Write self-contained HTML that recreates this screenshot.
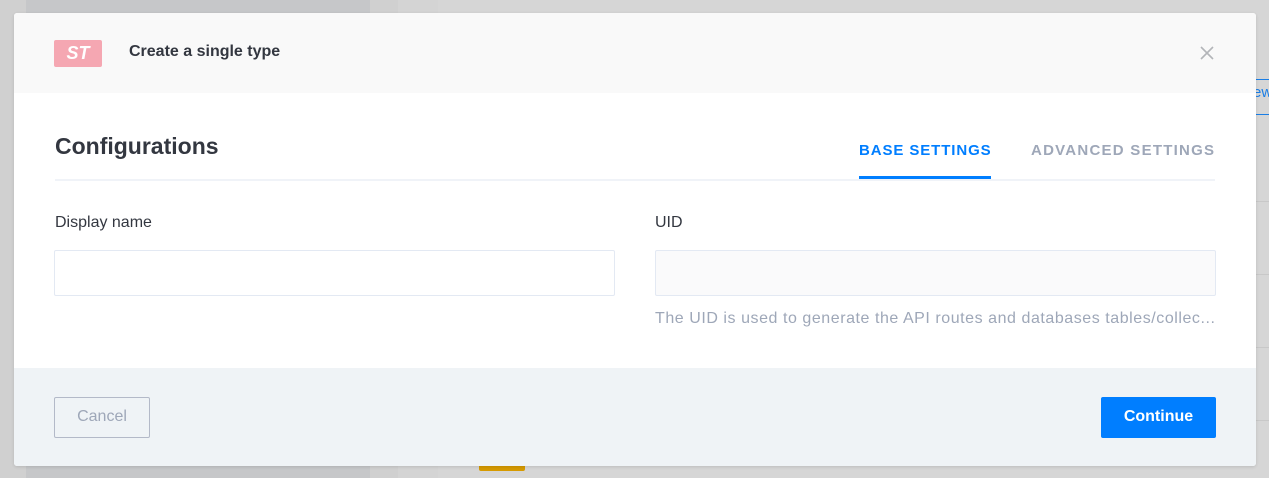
<!DOCTYPE html>
<html><head><style>
*{margin:0;padding:0;box-sizing:border-box}
body{width:1269px;height:478px;overflow:hidden;background:#d6d6d6;font-family:"Liberation Sans",sans-serif;position:relative}
.a{position:absolute}
</style></head><body>
<div class="a" style="left:0;top:0;width:26px;height:478px;background:#d0d0d0"></div>
<div class="a" style="left:26px;top:0;width:344px;height:478px;background:#c6c7c9"></div>
<div class="a" style="left:370px;top:0;width:28px;height:478px;background:#d0d0d0"></div>
<div class="a" style="left:398px;top:0;width:40px;height:478px;background:#d4d4d4"></div>
<div class="a" style="left:479px;top:464px;width:46px;height:7px;background:#d69a00;border-radius:2px"></div>
<div class="a" style="left:1256px;top:79px;width:13px;height:1px;background:#1a7ee6"></div>
<div class="a" style="left:1256px;top:114px;width:13px;height:1px;background:#1a7ee6"></div>
<div class="a" style="top:84px;color:#1a7ee6;font-size:15px;left:1253px">ew</div>
<div class="a" style="left:1256px;top:201px;width:13px;height:1px;background:#c8c8c8"></div>
<div class="a" style="left:1256px;top:274px;width:13px;height:1px;background:#c8c8c8"></div>
<div class="a" style="left:1256px;top:347px;width:13px;height:1px;background:#c8c8c8"></div>
<div class="a" style="left:1256px;top:420px;width:13px;height:1px;background:#c8c8c8"></div>

<div class="a" style="left:14px;top:13px;width:1242px;height:453px;background:#fff;border-radius:3px;overflow:hidden;box-shadow:0 1px 3px rgba(0,0,0,.12)">
 <div class="a" style="left:0;top:0;width:1242px;height:80px;background:#f9f9f9"></div>
 <div class="a" style="left:40px;top:27px;width:48px;height:27px;background:#f5a7b2;border-radius:2px;color:#fff;font-weight:bold;font-style:italic;font-size:18px;text-align:center;line-height:27px">ST</div>
 <div class="a" style="left:115px;top:30px;font-weight:bold;font-size:16px;color:#333740">Create a single type</div>
 <svg class="a" style="left:1186px;top:33px" width="14" height="14"><path d="M1 1L13 13M13 1L1 13" stroke="#b3b5b9" stroke-width="1.6"/></svg>
 <div class="a" style="left:41px;top:120px;font-weight:bold;font-size:23px;color:#333740">Configurations</div>
 <div class="a" style="left:845px;top:129px;font-weight:bold;font-size:15px;letter-spacing:0.9px;color:#007eff">BASE SETTINGS</div>
 <div class="a" style="left:1017px;top:129px;font-weight:bold;font-size:15px;letter-spacing:1.25px;color:#9ea7b8">ADVANCED SETTINGS</div>
 <div class="a" style="left:41px;top:166px;width:1160px;height:2px;background:#f0f3f8"></div>
 <div class="a" style="left:845px;top:163px;width:132px;height:3px;background:#007eff"></div>
 <div class="a" style="left:41px;top:201px;font-size:16px;color:#333740">Display name</div>
 <div class="a" style="left:641px;top:201px;font-size:16px;color:#333740">UID</div>
 <div class="a" style="left:40px;top:237px;width:561px;height:46px;border:1px solid #e3e9f3;border-radius:2px"></div>
 <div class="a" style="left:641px;top:237px;width:561px;height:46px;border:1px solid #e3e9f3;border-radius:2px;background:#fafafb"></div>
 <div class="a" style="left:641px;top:297px;font-size:16px;letter-spacing:0.55px;color:#9ea7b8;white-space:nowrap">The UID is used to generate the API routes and databases tables/collec...</div>
 <div class="a" style="left:0;top:355px;width:1242px;height:98px;background:#eff3f6"></div>
 <div class="a" style="left:40px;top:384px;width:96px;height:41px;border:1px solid #b3b9c8;border-radius:2px;color:#9ea7b8;font-size:16px;text-align:center;line-height:38px">Cancel</div>
 <div class="a" style="left:1087px;top:384px;width:115px;height:41px;background:#007eff;border-radius:2px;color:#fff;font-weight:bold;font-size:16px;text-align:center;line-height:39px">Continue</div>
</div>
</body></html>
